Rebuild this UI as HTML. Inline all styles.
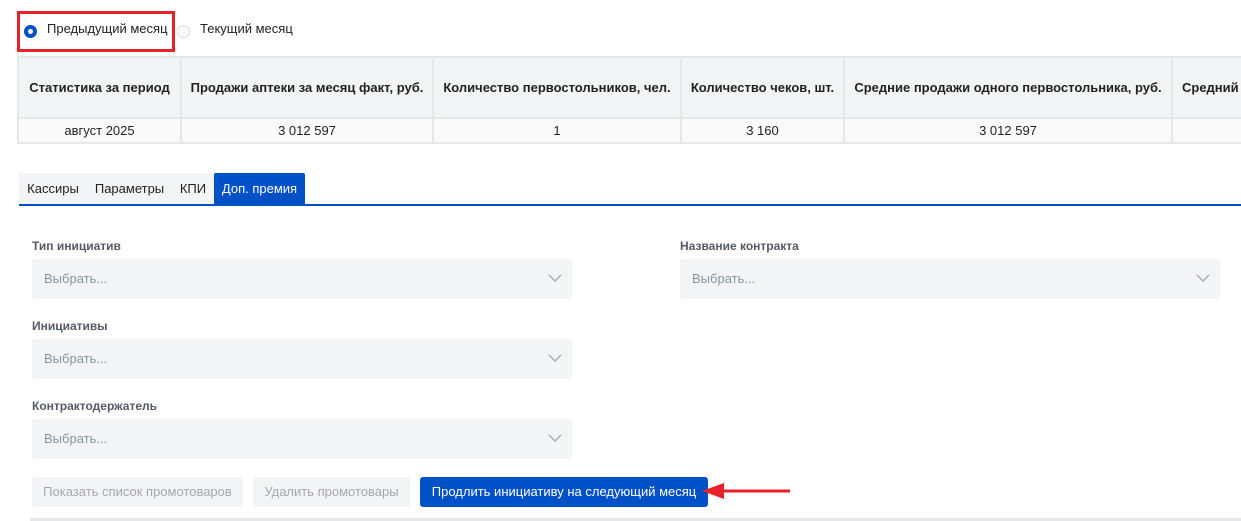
<!DOCTYPE html>
<html><head><meta charset="utf-8"><style>
*{box-sizing:border-box;margin:0;padding:0}
body{width:1241px;height:521px;overflow:hidden;background:#fff;font-family:"Liberation Sans",sans-serif;font-size:13px;color:#222;position:relative}
.abs{position:absolute}
.redbox{left:17px;top:11px;width:158px;height:41px;border:3px solid #e8202a}
.radio{width:13px;height:13px;border-radius:50%}
table{position:absolute;left:17px;top:56px;border-collapse:collapse;table-layout:fixed;width:1235px}
td,th{border:2px solid #e6e7e9;text-align:center;white-space:nowrap;overflow:hidden}
th{background:#f3f4f6;height:61px;font-weight:bold;font-size:13px;color:#222}
td{background:#fafafa;height:25px;font-size:13px}
.tab{position:absolute;top:173px;height:32px;line-height:31px;background:#f3f4f6;font-size:13px;color:#222;text-align:center}
.lbl{position:absolute;font-weight:bold;font-size:12px;color:#555b66}
.sel{position:absolute;height:40px;background:#f3f4f6;border-radius:3px;color:#8c93a0;font-size:13px;line-height:40px;padding-left:12px}
.sel svg{position:absolute;right:10px;top:15px}
.btn{position:absolute;top:477px;height:30px;line-height:30px;border-radius:3px;text-align:center;font-size:13px}
</style></head><body>
<div class="abs redbox"></div>
<div class="abs radio" style="left:24px;top:25px;background:#0050c8"></div>
<div class="abs" style="left:28px;top:29px;width:5px;height:5px;border-radius:50%;background:#fff"></div>
<div class="abs" style="left:47px;top:21px">Предыдущий месяц</div>
<div class="abs radio" style="left:177px;top:25px;border:1px solid #dcdde0;background:#fafafa"></div>
<div class="abs" style="left:200px;top:21px">Текущий месяц</div>
<table>
<colgroup><col style="width:163px"><col style="width:252px"><col style="width:248px"><col style="width:163px"><col style="width:328px"><col style="width:81px"></colgroup>
<tr><th>Статистика за период</th><th>Продажи аптеки за месяц факт, руб.</th><th>Количество первостольников, чел.</th><th>Количество чеков, шт.</th><th>Средние продажи одного первостольника, руб.</th><th style="text-align:left;padding-left:9px">Средний</th></tr>
<tr><td>август 2025</td><td>3 012 597</td><td>1</td><td>3 160</td><td>3 012 597</td><td></td></tr>
</table>
<div class="tab" style="left:19px;width:68px">Кассиры</div>
<div class="tab" style="left:87px;width:85px">Параметры</div>
<div class="tab" style="left:172px;width:42px">КПИ</div>
<div class="tab" style="left:214px;width:91px;background:#0050c8;color:#fff;border-radius:2px 2px 0 0">Доп. премия</div>
<div class="abs" style="left:19px;top:204px;width:1222px;height:2px;background:#0050c8"></div>
<div class="lbl" style="left:32px;top:239px">Тип инициатив</div>
<div class="sel" style="left:32px;top:259px;width:540px">Выбрать...<svg width="14" height="9"><path d="M1 1l6 6 6-6" fill="none" stroke="#a7acb5" stroke-width="1.5"/></svg></div>
<div class="lbl" style="left:680px;top:239px">Название контракта</div>
<div class="sel" style="left:680px;top:259px;width:540px">Выбрать...<svg width="14" height="9"><path d="M1 1l6 6 6-6" fill="none" stroke="#a7acb5" stroke-width="1.5"/></svg></div>
<div class="lbl" style="left:32px;top:319px">Инициативы</div>
<div class="sel" style="left:32px;top:339px;width:540px">Выбрать...<svg width="14" height="9"><path d="M1 1l6 6 6-6" fill="none" stroke="#a7acb5" stroke-width="1.5"/></svg></div>
<div class="lbl" style="left:32px;top:399px">Контрактодержатель</div>
<div class="sel" style="left:32px;top:419px;width:540px">Выбрать...<svg width="14" height="9"><path d="M1 1l6 6 6-6" fill="none" stroke="#a7acb5" stroke-width="1.5"/></svg></div>
<div class="btn" style="left:32px;width:211px;background:#f3f4f6;color:#a3a8b0">Показать список промотоваров</div>
<div class="btn" style="left:253px;width:157px;background:#f3f4f6;color:#a3a8b0">Удалить промотовары</div>
<div class="btn" style="left:420px;width:288px;background:#0050c8;color:#fff">Продлить инициативу на следующий месяц</div>
<svg class="abs" style="left:700px;top:481px" width="92" height="20"><path d="M22 10H90" stroke="#e8202a" stroke-width="3"/><path d="M2 10L24 2V18Z" fill="#e8202a"/></svg>
<div class="abs" style="left:30px;top:518px;width:1211px;height:3px;background:#e6e7e9"></div>
</body></html>
